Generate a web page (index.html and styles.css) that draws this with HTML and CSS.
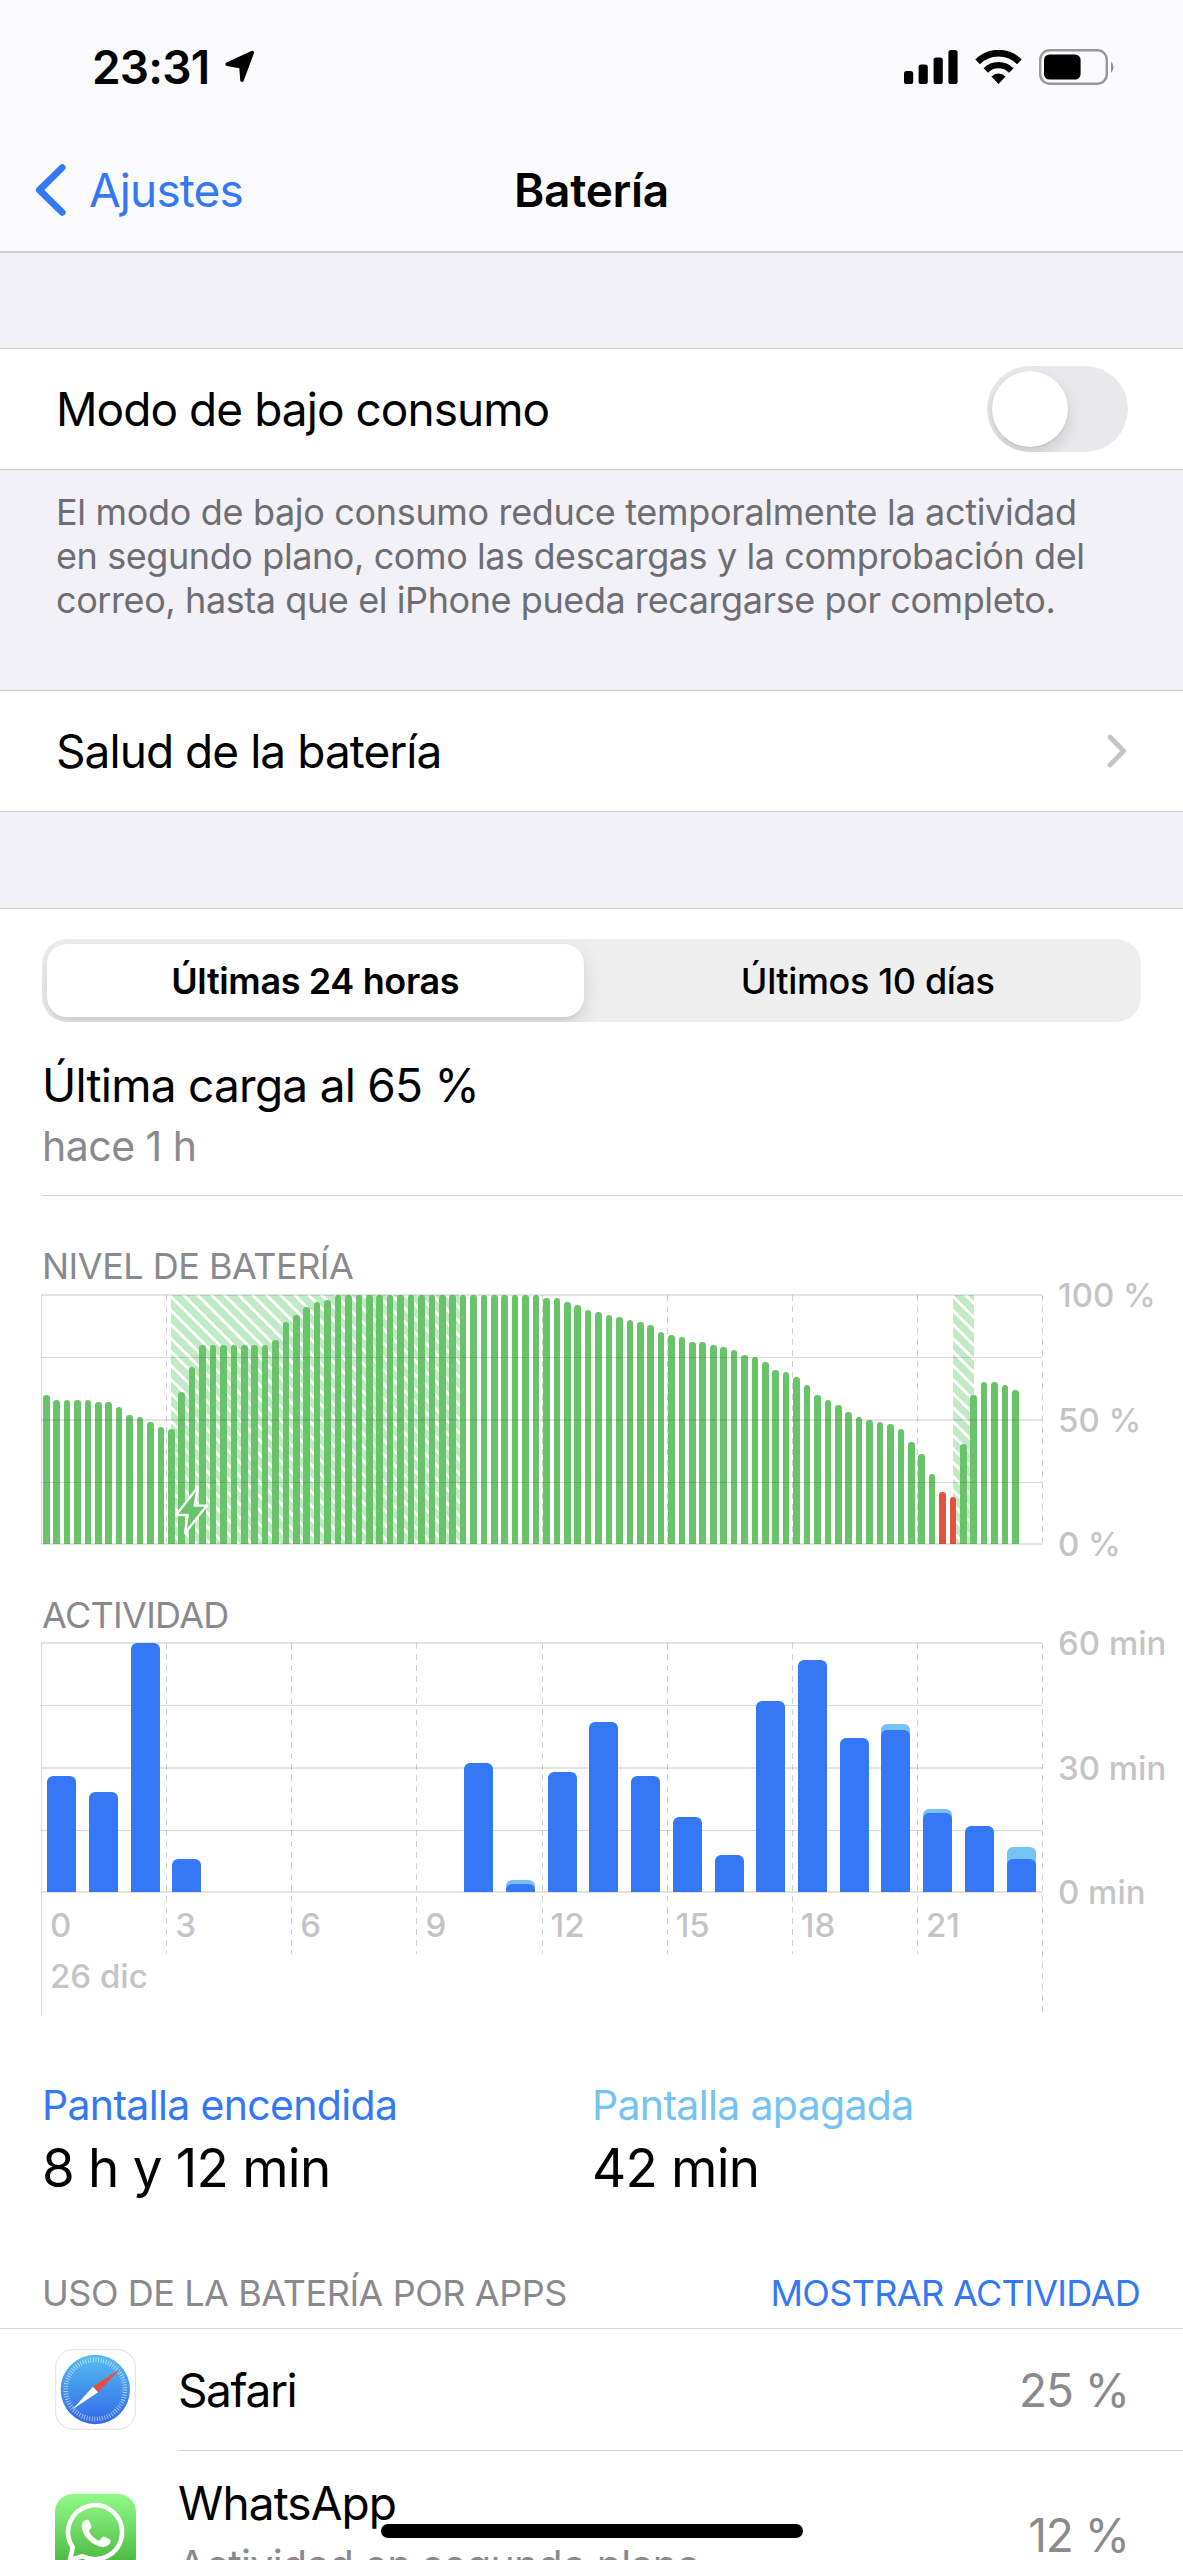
FILE: index.html
```html
<!DOCTYPE html>
<html lang="es">
<head>
  <meta charset="UTF-8" />
  <meta name="viewport" content="width=device-width, initial-scale=1.0" />
  <title>Batería</title>
  <link rel="stylesheet" href="styles.css">
</head>
<body>
  <header class="top">
    <div class="status-bar">
      <div class="status-left">
        <span class="time">23:31</span>
        <svg class="location" width="32" height="34" viewBox="0 0 32 34">
          <path d="M3.2 14.2 L28.2 2.6 L18 30 L17 16.8 Z" fill="#000" stroke="#000" stroke-width="3.6" stroke-linejoin="round" />
        </svg>
      </div>
      <div class="status-right">
        <svg width="54" height="34" viewBox="0 0 54 34">
          <rect x="0" y="21" width="9.2" height="13" rx="2.6" />
          <rect x="14.6" y="14.6" width="9.2" height="19.4" rx="2.6" />
          <rect x="29.6" y="7.4" width="9.2" height="26.6" rx="2.6" />
          <rect x="44.4" y="0" width="9.2" height="34" rx="2.6" />
        </svg>
        <svg class="wifi" width="47" height="34" viewBox="0 0 47 34">
          <path d="M2.6 11.8 A29.5 29.5 0 0 1 44.4 11.8" fill="none" stroke="#000" stroke-width="6.6" />
          <path d="M10.8 20.4 A18 18 0 0 1 36.2 20.4" fill="none" stroke="#000" stroke-width="6.4" />
          <path d="M16.4 26.4 A10.4 10.4 0 0 1 30.6 26.4 L23.5 34 Z" />
        </svg>
        <svg class="battery" width="76" height="36" viewBox="0 0 76 36">
          <rect x="1.2" y="1.2" width="66.6" height="33.6" rx="9.6" fill="none" stroke="#98989b" stroke-width="2.4" />
          <rect x="5" y="5.4" width="36.6" height="25.2" rx="5.6" />
          <path d="M72 12.4 A8 8 0 0 1 72 24 Z" fill="#8f8f92" />
        </svg>
      </div>
    </div>
    <nav class="nav-bar">
      <a class="back">
        <svg width="31" height="52" viewBox="0 0 31 52">
          <path d="M27.2 3.6 L4.4 26 L27.2 48.4" fill="none" stroke="#3478f6" stroke-width="6.8" stroke-linecap="round" stroke-linejoin="round" />
        </svg>
        <span>Ajustes</span>
      </a>
      <h1 class="nav-title">Batería</h1>
    </nav>
  </header>

  <section class="row low-power">
    <span class="row-label">Modo de bajo consumo</span>
    <div class="switch"><div class="knob"></div></div>
  </section>
  <p class="footnote">
    <span class="first-line">El modo de bajo consumo reduce temporalmente la actividad</span><br>
    <span>en segundo plano, como las descargas y la comprobación del</span><br>
    <span>correo, hasta que el iPhone pueda recargarse por completo.</span>
  </p>

  <section class="row health">
    <span class="row-label">Salud de la batería</span>
    <svg width="20" height="34" viewBox="0 0 20 34">
      <path d="M3 3 L16.6 17 L3 31" fill="none" stroke="#c5c5c7" stroke-width="4.8" stroke-linecap="round" stroke-linejoin="round" />
    </svg>
  </section>

  <main class="panel">
    <div class="segmented">
      <div class="segment active">Últimas 24 horas</div>
      <div class="segment">Últimos 10 días</div>
    </div>

    <div class="last-charge">
      <h2>Última carga al 65 %</h2>
      <p>hace 1 h</p>
    </div>

    <h3 class="chart-title">NIVEL DE BATERÍA</h3>
    <div class="chart">
      <div class="plot">
        <div class="v-lines"><i></i><i></i><i></i><i></i><i></i><i></i><i></i><i></i><i></i></div>
        <div class="hatch" style="left: 13.02%; width: 28.9%"></div>
        <div class="hatch" style="left: 91.15%; width: 2.08%"></div>
        <div class="bars" id="level"></div>
        <div class="h-lines"></div>
        <svg class="bolt" width="40" height="56" viewBox="0 0 40 56">
          <path d="M26 5 L4 33 L15.6 33 L13 51 L35 23.6 L22.6 23.6 Z" fill="#69c469" stroke="#fff" stroke-width="2.4" stroke-linejoin="round" />
        </svg>
      </div>
      <div class="scale">
        <span>100 %</span>
        <span>50 %</span>
        <span>0 %</span>
      </div>
    </div>

    <h3 class="chart-title title-activity">ACTIVIDAD</h3>
    <div class="chart activity">
      <div class="plot-area">
        <div class="v-lines with-axis"><i></i><i></i><i></i><i></i><i></i><i></i><i></i><i></i><i></i></div>
        <div class="plot">
          <div class="h-lines"></div>
          <div class="bars" id="activity"></div>
        </div>
        <div class="hours">
          <span>0</span><span>3</span><span>6</span><span>9</span><span>12</span><span>15</span><span>18</span><span>21</span>
        </div>
        <div class="date">26 dic</div>
      </div>
      <div class="scale">
        <span>60 min</span>
        <span>30 min</span>
        <span>0 min</span>
      </div>
    </div>

    <div class="totals">
      <div>
        <p class="screen-on">Pantalla encendida</p>
        <strong>8 h y 12 min</strong>
      </div>
      <div>
        <p class="screen-off">Pantalla apagada</p>
        <strong>42 min</strong>
      </div>
    </div>

    <div class="apps-header">
      <span>USO DE LA BATERÍA POR APPS</span>
      <a class="apps-toggle">MOSTRAR ACTIVIDAD</a>
    </div>

    <div class="app">
      <svg class="app-icon" width="81" height="81" viewBox="0 0 81 81">
        <defs>
          <linearGradient id="sea" x1="0" y1="0" x2="0" y2="1">
            <stop offset="0" stop-color="#55bdf0" />
            <stop offset="1" stop-color="#3368e8" />
          </linearGradient>
        </defs>
        <rect x="0.6" y="0.6" width="79.8" height="79.8" rx="18" fill="#fff" stroke="#e6e6e8" stroke-width="1.2" />
        <circle cx="40.3" cy="40.5" r="34.7" fill="url(#sea)" />
        <circle cx="40.3" cy="40.5" r="29.6" fill="none" stroke="#fff" stroke-opacity="0.6" stroke-width="4.6" stroke-dasharray="0.9 1.683" />
        <path d="M65.6 19.6 L37.9 37.8 L43 43.2 Z" fill="#eb4d3d" />
        <path d="M17.4 60.4 L37.9 37.8 L43 43.2 Z" fill="#fff" />
      </svg>
      <div class="app-text">
        <span class="app-name short">Safari</span>
        <span class="percent">25 %</span>
      </div>
    </div>
    <div class="app app-tall">
      <svg class="app-icon" width="81" height="81" viewBox="0 0 81 81">
        <defs>
          <linearGradient id="leaf" x1="0" y1="0" x2="0" y2="1">
            <stop offset="0" stop-color="#91fb89" />
            <stop offset="1" stop-color="#42ad35" />
          </linearGradient>
        </defs>
        <rect width="81" height="81" rx="18" fill="url(#leaf)" />
        <path d="M17.8 53.4 A27 27 0 1 1 27.8 62.2 L15 65.8 Z" fill="none" stroke="#fff" stroke-width="4.6" stroke-linejoin="round" />
        <path d="M32 25.8 C29 26 26.6 29 26.8 32.6 C27.2 42 37.6 52 47.6 53 C51.6 53.2 55.6 50.4 55.8 46.6 C55.9 45.6 49.8 42.4 48.4 42.4 C47 42.4 45.4 46.2 44 46.4 C41.6 46.4 34.6 40 34 37.2 C34 36.2 36.6 34.2 36.4 32.6 C36.2 31.4 34.2 26.2 33.4 25.9 Z" fill="#fff" />
      </svg>
      <div class="app-text">
        <div class="app-lines">
          <span class="app-name">WhatsApp</span>
          <span class="app-detail">Actividad en segundo plano</span>
        </div>
        <span class="percent">12 %</span>
      </div>
    </div>
  </main>
  <div class="home-indicator"></div>

  <script src="script.js"></script>
</body>
</html>
```
FILE: styles.css
```css
* {
  box-sizing: border-box;
}

body {
  margin: 0;
  width: 1183px;
  height: 2560px;
  overflow: hidden;
  position: relative;
  background: #f2f1f7;
  font-family: 'Inter', 'Liberation Sans', sans-serif;
  font-size: 46px;
  color: #000;
}

h1, h2, h3, p {
  margin: 0;
  font-weight: 400;
}

svg {
  display: block;
  flex: none;
}

span, a, strong, h1, h2, h3 {
  white-space: nowrap;
}

/* cabecera */
.top {
  height: 253px;
  background: #fbfbfd;
  border-bottom: 2px solid #cfced4;
}

.status-bar {
  height: 134px;
  padding: 0 68px 0 92px;
  display: flex;
  align-items: center;
  justify-content: space-between;
}

.status-left,
.status-right {
  display: flex;
  align-items: center;
}

.time {
  font-weight: 600;
  letter-spacing: -0.8px;
}

.location {
  margin-left: 15px;
}

.wifi {
  margin-left: 17px;
}

.battery {
  margin-left: 17px;
}

.nav-bar {
  height: 113px;
  padding: 0 35px 2px;
  display: grid;
  grid-template-columns: 1fr auto 1fr;
  align-items: center;
}

.back {
  display: flex;
  align-items: center;
  gap: 23px;
  color: #3478f6;
  letter-spacing: -0.9px;
}

.nav-title {
  font-size: 46px;
  font-weight: 600;
  letter-spacing: -0.3px;
}

/* filas */
.row {
  height: 122px;
  padding: 0 55px 0 56px;
  display: flex;
  align-items: center;
  justify-content: space-between;
  background: #fff;
  border-top: 1px solid #c8c8cb;
  border-bottom: 1px solid #c8c8cb;
}

.low-power {
  margin-top: 95px;
}

.health {
  padding-right: 56px;
}

.row-label {
  letter-spacing: -0.95px;
}

.switch {
  width: 141px;
  height: 86px;
  padding: 5px;
  border-radius: 43px;
  background: #e9e9eb;
  overflow: hidden;
}

.knob {
  width: 76px;
  height: 76px;
  border-radius: 50%;
  background: #fff;
  box-shadow: 0 8px 16px rgba(0, 0, 0, 0.13), 0 1px 3px rgba(0, 0, 0, 0.08);
}

.footnote {
  height: 220px;
  padding: 20px 56px 0;
  font-size: 36px;
  line-height: 44.2px;
  letter-spacing: -0.41px;
  color: #6d6d72;
}

.first-line {
  letter-spacing: -0.33px;
}

/* panel */
.panel {
  margin-top: 96px;
  padding-top: 30px;
  background: #fff;
  border-top: 1px solid #c8c8cb;
}

.segmented {
  height: 83px;
  margin: 0 42px;
  padding: 5px;
  display: grid;
  grid-template-columns: 1fr 1fr;
  gap: 16px;
  border-radius: 25px;
  background: #eeeeef;
  overflow: hidden;
}

.segment {
  display: flex;
  align-items: center;
  justify-content: center;
  font-size: 36px;
  font-weight: 500;
  letter-spacing: -0.36px;
  white-space: nowrap;
}

.segment.active {
  font-weight: 600;
  border-radius: 20px;
  background: #fff;
  box-shadow: 0 8px 20px rgba(0, 0, 0, 0.12), 0 3px 3px rgba(0, 0, 0, 0.04);
}

.last-charge {
  margin-left: 42px;
  padding: 33px 0 24px;
  border-bottom: 1px solid #d2d2d5;
}

.last-charge h2 {
  font-size: 46px;
  line-height: 60px;
  letter-spacing: -0.75px;
}

.last-charge p {
  margin-top: 6px;
  font-size: 41px;
  line-height: 50px;
  letter-spacing: -0.5px;
  color: #8a8a8e;
}

.chart-title {
  margin: 48px 0 7px 42px;
  font-size: 36px;
  line-height: 44px;
  letter-spacing: -0.5px;
  color: #8a8a8e;
}

/* graficos */
.chart {
  display: flex;
  height: 249px;
  margin-left: 41px;
}

.plot-area {
  position: relative;
  width: 1001px;
}

.plot {
  position: relative;
  width: 1001px;
  height: 249px;
}

.bars {
  position: relative;
  height: 100%;
  display: flex;
  align-items: flex-end;
}

.slot {
  flex: 1;
  height: 100%;
  display: flex;
  flex-direction: column;
  justify-content: flex-end;
  align-items: center;
}

.level-bar {
  width: 6.6px;
  border-radius: 3.3px 3.3px 0 0;
  background: #69c469;
}

.level-bar.low {
  background: #e4513f;
}

.activity-bar {
  width: 29px;
  overflow: hidden;
  display: flex;
  align-items: flex-end;
  border-radius: 6px 6px 0 0;
  background: #75c3f3;
}

.activity-on {
  width: 100%;
  border-radius: 6px 6px 0 0;
  background: #3478f6;
}

.h-lines {
  position: absolute;
  inset: -1px 0;
  background:
    linear-gradient(rgba(60, 60, 67, 0.14), rgba(60, 60, 67, 0.14)) 0 0 / 100% 2px no-repeat,
    linear-gradient(rgba(60, 60, 67, 0.2), rgba(60, 60, 67, 0.2)) 0 25% / 100% 1px no-repeat,
    linear-gradient(rgba(60, 60, 67, 0.14), rgba(60, 60, 67, 0.14)) 0 50% / 100% 2px no-repeat,
    linear-gradient(rgba(60, 60, 67, 0.2), rgba(60, 60, 67, 0.2)) 0 75% / 100% 1px no-repeat,
    linear-gradient(rgba(60, 60, 67, 0.14), rgba(60, 60, 67, 0.14)) 0 100% / 100% 2px no-repeat;
}

.v-lines {
  position: absolute;
  inset: 0 -1px 0 0;
  display: flex;
  justify-content: space-between;
}

.v-lines i {
  width: 1px;
  height: 100%;
  background: repeating-linear-gradient(#d0d0d3 0 6px, transparent 6px 11px);
}

.v-lines i:first-child {
  background: #dcdcdf;
}

.v-lines.with-axis i {
  height: 311px;
}

.v-lines.with-axis i:first-child,
.v-lines.with-axis i:last-child {
  height: 373px;
}

.hatch {
  position: absolute;
  top: 0;
  height: 100%;
  background: repeating-linear-gradient(45deg, #c3eac6 0 7px, #fff 7px 9.8px);
}

.bolt {
  position: absolute;
  left: 131px;
  bottom: 6px;
}

.scale {
  height: 289px;
  margin: -20px 0 0 16px;
  display: flex;
  flex-direction: column;
  justify-content: space-between;
}

.scale,
.hours,
.date {
  font-size: 33px;
  font-weight: 500;
  line-height: 40px;
  color: #c4c4c6;
}

.title-activity {
  margin-top: 49px;
  margin-bottom: 6px;
  letter-spacing: -0.7px;
}

.activity {
  height: 373px;
}

.hours {
  display: grid;
  grid-template-columns: repeat(8, 1fr);
  padding: 13px 0 11px;
}

.hours span,
.date {
  padding-left: 9px;
}

/* totales */
.totals {
  margin: 64px 0 0 42px;
  display: grid;
  grid-template-columns: 550px 1fr;
}

.totals p {
  font-size: 41px;
  line-height: 50px;
  letter-spacing: -0.67px;
}

.totals strong {
  display: block;
  margin-top: 8px;
  font-size: 53px;
  font-weight: 400;
  line-height: 60px;
  letter-spacing: -0.8px;
}

.screen-on {
  color: #3478f6;
}

.screen-off {
  color: #75c3f3;
}

.apps-header {
  margin-top: 73px;
  padding: 0 43px 13px 42px;
  display: flex;
  justify-content: space-between;
  font-size: 36px;
  line-height: 44px;
  letter-spacing: -0.44px;
  color: #8a8a8e;
  border-bottom: 1px solid #d2d2d5;
}

.apps-toggle {
  color: #3478f6;
  letter-spacing: -0.65px;
}

/* apps */
.app {
  height: 122px;
  padding-left: 55px;
  display: flex;
  align-items: center;
}

.app-icon {
  margin-bottom: 2px;
}

.app-text {
  flex: 1;
  height: 100%;
  margin-left: 42px;
  padding-right: 54px;
  display: flex;
  align-items: center;
  justify-content: space-between;
  border-bottom: 1px solid #d2d2d5;
}

.app-tall {
  height: 168px;
}

.app-name {
  letter-spacing: -0.9px;
}

.app-name.short {
  letter-spacing: -1.4px;
}

.app-lines {
  padding-bottom: 6px;
  display: flex;
  flex-direction: column;
  gap: 7px;
}

.app-lines .app-name {
  line-height: 60px;
}

.app-detail {
  font-size: 41px;
  line-height: 50px;
  letter-spacing: -0.67px;
  color: #8a8a8e;
}

.percent {
  letter-spacing: -1px;
  color: #8a8a8e;
}

.home-indicator {
  position: absolute;
  left: 381px;
  top: 2524px;
  width: 422px;
  height: 14px;
  border-radius: 7px;
  background: #000;
}
```
FILE: script.js
```js
// nivel cada 15 minutos, en %
const levels = [
  60, 58, 58, 58, 58, 57, 57, 55, 52, 51, 49, 47,
  46, 61, 71, 80, 80, 80, 80, 80, 80, 80, 82, 89,
  92, 95, 97, 98, 100, 100, 100, 100, 100, 100, 100, 100,
  100, 100, 100, 100, 100, 100, 100, 100, 100, 100, 100, 100,
  99, 99, 97, 96, 94, 93, 92, 91, 90, 89, 88, 85,
  84, 83, 81, 81, 80, 79, 78, 76, 75, 73, 70, 69,
  67, 64, 60, 58, 56, 53, 51, 50, 49, 48, 46, 41,
  36, 28, 21, 19, 40, 60, 65, 65, 64, 62, 0, 0
];

// minutos por hora: [total, pantalla encendida]
const activity = [
  [28, 28], [24, 24], [60, 60], [8, 8], [0, 0], [0, 0], [0, 0], [0, 0],
  [0, 0], [0, 0], [31, 31], [3, 2], [29, 29], [41, 41], [28, 28], [18, 18],
  [9, 9], [46, 46], [56, 56], [37, 37], [40.4, 39], [20, 19], [16, 16], [10.8, 8]
];

document.getElementById('level').innerHTML = levels.map(v => {
  const low = v > 0 && v <= 21 ? ' low' : '';
  return `<div class="slot"><div class="level-bar${low}" style="height: ${v}%"></div></div>`;
}).join('');

document.getElementById('activity').innerHTML = activity.map(([total, on]) => {
  const inner = total ? on / total * 100 : 0;
  return `<div class="slot"><div class="activity-bar" style="height: ${total / 60 * 100}%">` +
    `<div class="activity-on" style="height: ${inner}%"></div></div></div>`;
}).join('');
```
